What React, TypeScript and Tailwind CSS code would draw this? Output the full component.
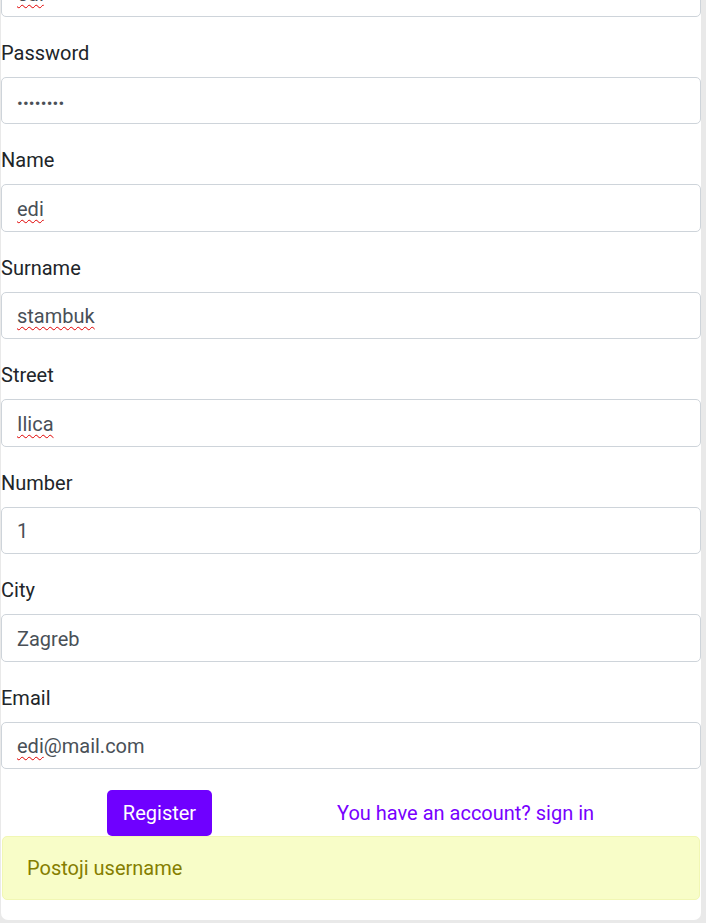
import React from "react";

type Field = { label: string; value: string; spell?: string; rest?: string; password?: boolean };

const fields: Field[] = [
  { label: "Username", value: "edi", spell: "edi" },
  { label: "Password", value: "", password: true },
  { label: "Name", value: "edi", spell: "edi" },
  { label: "Surname", value: "stambuk", spell: "stambuk" },
  { label: "Street", value: "Ilica", spell: "Ilica" },
  { label: "Number", value: "1" },
  { label: "City", value: "Zagreb" },
  { label: "Email", value: "edi@mail.com", spell: "edi", rest: "@mail.com" },
];

function FakeInput({ f }: { f: Field }) {
  return (
    <div className="flex h-[47.5px] w-full items-center rounded-[5px] border border-[#ced4da] bg-white px-[15px] pt-[2px] text-[20px] leading-[30px] text-[#495057]">
      {f.password ? (
        <span className="mt-[3px] text-[17px] leading-[30px] tracking-[0.2px] text-[#495057]">••••••••</span>
      ) : f.spell ? (
        <span>
          <span className="underline decoration-[#e00000] decoration-wavy decoration-1 underline-offset-[3px]">{f.spell}</span>
          {f.rest ?? ""}
        </span>
      ) : (
        <span>{f.value}</span>
      )}
    </div>
  );
}

export default function App() {
  return (
    <div className="h-[923px] w-[706px] overflow-hidden bg-[#e9e9e9] font-['Roboto',sans-serif]">
      <div className="ml-[1px] w-[700px] rounded-b-[7px] bg-white pb-5">
        {/* form, scrolled so only the bottom of the first input shows */}
        <div className="-mt-[31px] flex flex-col gap-[22px]">
          {fields.map((f, i) => (
            <div key={f.label}>
              {i > 0 ? (
                <div className="mb-2 h-[30px] text-[20px] leading-[29px] text-[#212529]">{f.label}</div>
              ) : null}
              <FakeInput f={f} />
            </div>
          ))}
        </div>

        {/* actions */}
        <div className="mt-[21px] flex items-center">
          <button className="ml-[106px] h-[46px] w-[105px] rounded-[5px] bg-[#6f00ff] text-[20px] leading-[30px] text-white">
            Register
          </button>
          <a className="ml-[125px] text-[20px] leading-[30px] text-[#7800ff]">You have an account? sign in</a>
        </div>

        {/* error */}
        <div className="mx-[1px] rounded-[5px] border border-[#f1f7b4] bg-[#f8fdc8] px-[24px] py-4 text-[20px] leading-[30px] text-[#857e00]">
          Postoji username
        </div>
      </div>
    </div>
  );
}
